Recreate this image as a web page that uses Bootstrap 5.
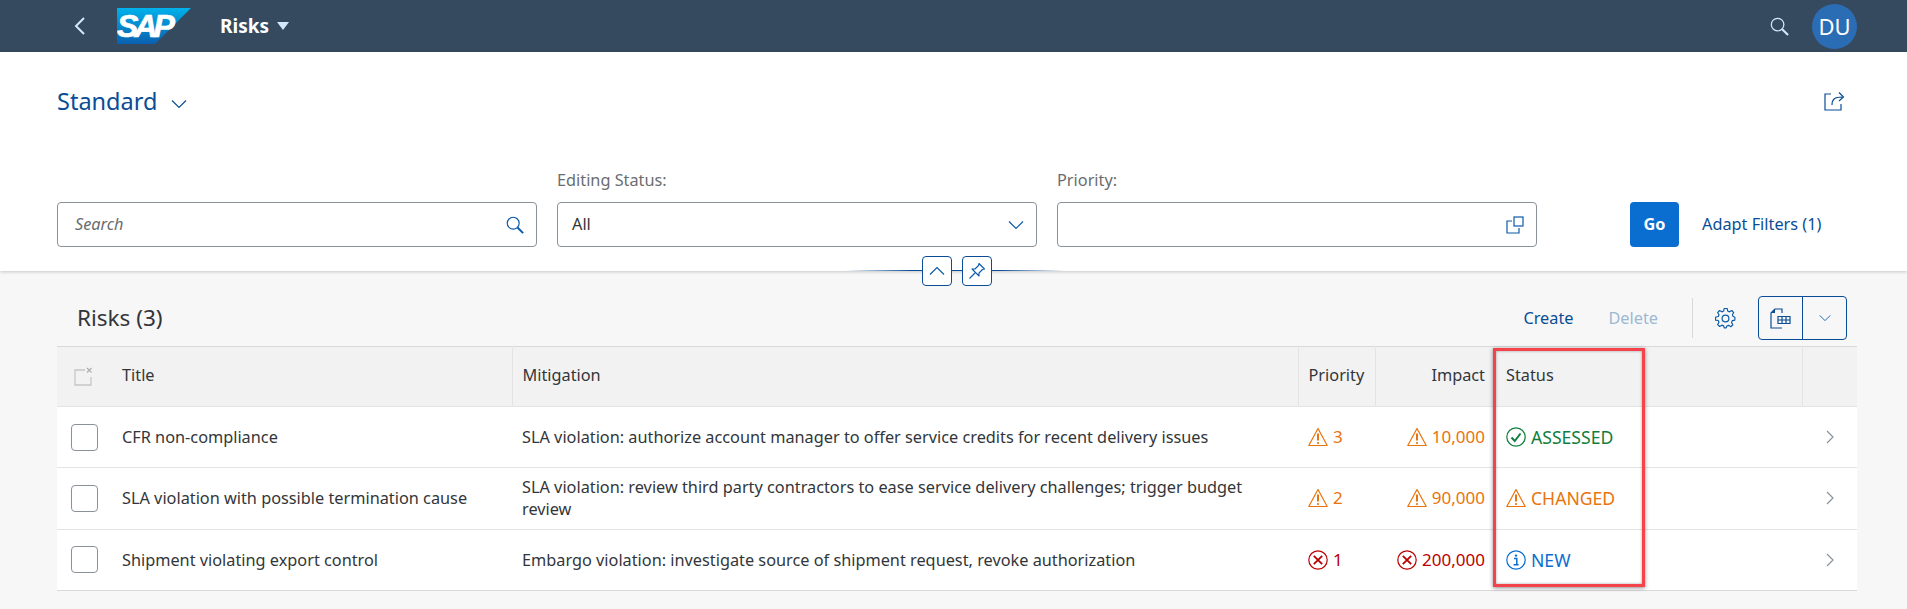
<!DOCTYPE html>
<html lang="en">
<head>
  <meta charset="UTF-8" />
  <meta name="viewport" content="width=device-width, initial-scale=1.0"/>
  <title>Risks</title>
  <link href="https://cdn.jsdelivr.net/npm/bootstrap@5.3.0/dist/css/bootstrap.min.css" rel="stylesheet">
  <style>
    html, body { height: 100%; }
    body {
      background: #f7f7f7;
      color: #32363a;
      font-family: "Noto Sans", "Liberation Sans", sans-serif;
      font-size: 16.3px;
      overflow: hidden;
      position: relative;
    }
    svg { display: block; flex: none; }
    .shell-bar { background: #354a5f; height: 52px; padding: 0 50px 0 74px; }
    .shell-title { color: #fff; font-weight: 700; font-size: 19px; margin-left: 29px; }
    .shell-logo { margin-left: 32px; }
    .avatar {
      width: 45px; height: 45px; border-radius: 50%;
      background: #2b6db5; color: #fff; font-size: 22px;
      margin-left: 23px;
    }
    .filter-area { background: #fff; height: 219px; padding: 31px 62px 24px 57px; box-shadow: 0 1px 3px rgba(0,0,0,.2); position: relative; }
    .variant-name { color: #0a4d96; font-size: 23.5px; line-height: 36px; }
    .variant-arrow { margin-left: 14px; margin-top: 6px; color: #0a4d96; }
    .filter-row { margin-top: 50px; display: grid; grid-template-columns: repeat(3, 480px) auto; column-gap: 20px; }
    .filter-label { color: #6a6d70; line-height: 22px; margin-bottom: 11px; height: 22px; }
    .filter-box { height: 45px; border: 1px solid #89919a; border-radius: 4px; background: #fff; padding: 0 12px 0 14px; }
    .filter-hint { font-style: italic; color: #6a6d70; margin-left: 3px; }
    .filter-actions { padding-left: 73px; padding-top: 33px; }
    .go-btn { background: #0a6ed1; color: #fff; font-weight: 700; width: 49px; height: 45px; border: 0; border-radius: 4px; font-size: 16.3px; padding: 0; }
    .link-blue { color: #0a4d96; text-decoration: none; }
    .adapt-link { margin-left: 23px; }
    .collapse-line {
      position: absolute; left: 845px; width: 220px; top: 218px; height: 1px;
      background: linear-gradient(to right, transparent, #0a4d96 30%, #0a4d96 70%, transparent);
    }
    .collapse-btns { position: absolute; left: 922px; top: 204px; gap: 10px; }
    .mini-btn { width: 30px; height: 30px; border: 1px solid #0a4d96; border-radius: 4px; background: #fff; }
    .toolbar-row { height: 75px; padding: 25px 60px 6px 77px; }
    .table-heading { font-size: 22.5px; }
    .tool-sep { width: 1px; height: 40px; background: #d9d9d9; margin: 0 22px 0 34px; }
    .disabled-blue { color: #9db8d4; margin-left: 35px; }
    .view-group { border: 1px solid #0a4d96; border-radius: 4px; height: 44px; width: 89px; margin-left: 22px; }
    .view-group > div { height: 100%; }
    .view-left { width: 44px; border-right: 1px solid #0a4d96; }
    .view-right { flex: 1; }
    .risk-wrap { margin: 0 50px 0 57px; }
    .risk-table { table-layout: fixed; width: 1800px; margin: 0; color: #32363a; background: #fff; }
    .risk-table th, .risk-table td { vertical-align: middle; padding: 0 10px; border-bottom: 1px solid #e4e4e4; font-weight: 400; line-height: 22px; }
    .risk-table thead th { background: #f2f2f2; height: 60px; border-top: 1px solid #d9d9d9; border-bottom: 1px solid #e4e4e4; padding-bottom: 4px; }
    .risk-table tbody td { height: 61.3px; }
    .risk-table tbody tr:last-child td { border-bottom: 1px solid #d9d9d9; }
    .bar-right { border-right: 1px solid #e4e4e4; }
    .c-sel { width: 55px; } .c-title { width: 400px; } .c-mit { width: 786px; }
    .c-pri { width: 77px; } .c-imp { width: 118px; } .c-sta { width: 309px; } .c-nav { width: 55px; }
    .sel-box { width: 27px; height: 27px; border: 1px solid #89919a; border-radius: 4px; margin-left: 14px; background: #fff; }
    .head-sel { margin-left: 17px; }
    .pad-sel { padding: 0 !important; }
    .pad-sta { padding-left: 13px !important; }
    .nav-arrow { margin-right: 13px; color: #89919a; }
    .warn-text { color: #e9730c; } .err-text { color: #bb0000; }
    .ok-text { color: #107e3e; } .info-text { color: #0a6ed1; }
    .status-gap { gap: 5px; font-size: 17px; }
    .status-col .status-gap { font-size: 17.6px; }
    .red-frame {
      position: absolute; left: 1493px; top: 348px; width: 152px; height: 239px;
      border: 3px solid #f4434b;
      box-shadow: 0 1px 4px rgba(0,0,0,.45), inset 0 0 3px rgba(0,0,0,.35);
      pointer-events: none;
    }
  </style>
</head>
<body>

  <svg width="0" height="0" class="position-absolute">
    <symbol id="ic-warn" viewBox="0 0 20 20"><path d="M10 1.500 19.200 18.500H.8Z" fill="none" stroke="currentColor" stroke-width="1.200" stroke-linejoin="round"/><path d="M10 6.500v7" stroke="currentColor" stroke-width="2"/><circle cx="10" cy="16" r="1.100" fill="currentColor"/></symbol>
    <symbol id="ic-err" viewBox="0 0 20 20"><circle cx="10" cy="10" r="9.200" fill="none" stroke="currentColor" stroke-width="1.200"/><path d="M5.800 5.800 14.200 14.200M14.200 5.800 5.800 14.200" stroke="currentColor" stroke-width="1.800"/></symbol>
    <symbol id="ic-ok" viewBox="0 0 20 20"><circle cx="10" cy="10" r="9.200" fill="none" stroke="currentColor" stroke-width="1.200"/><path d="M5.500 10.500 8.800 14 14.500 6.500" fill="none" stroke="currentColor" stroke-width="2"/></symbol>
    <symbol id="ic-info" viewBox="0 0 20 20"><circle cx="10" cy="10" r="9.200" fill="none" stroke="currentColor" stroke-width="1.200"/><circle cx="10" cy="5.600" r="1.200" fill="currentColor"/><path d="M8 8.600h2.800v6M7.600 14.800h5" fill="none" stroke="currentColor" stroke-width="1.500"/></symbol>
    <symbol id="ic-search" viewBox="0 0 20 20"><circle cx="8" cy="8" r="6.600" fill="none" stroke="currentColor" stroke-width="1.300"/><path d="M12.800 12.800 19 19" stroke="currentColor" stroke-width="2.200"/></symbol>
    <symbol id="ic-down" viewBox="0 0 16 10"><path d="M1 1.500 8 8.500 15 1.500" fill="none" stroke="currentColor" stroke-width="1.200"/></symbol>
    <symbol id="ic-next" viewBox="0 0 8 14"><path d="M1 1 7 7 1 13" fill="none" stroke="currentColor" stroke-width="1.200"/></symbol>
  </svg>

  <!-- shell bar -->
  <nav class="shell-bar d-flex align-items-center">
    <svg width="11" height="18" viewBox="0 0 11 18"><path d="M10 1 2 9l8 8" fill="none" stroke="#d1e8ff" stroke-width="2"/></svg>
    <svg class="shell-logo" width="74" height="36" viewBox="0 0 74 36">
      <defs><linearGradient id="sapgrad" x1="0" y1="0" x2="0" y2="1"><stop offset="0" stop-color="#00b1eb"/><stop offset="1" stop-color="#0a60b0"/></linearGradient></defs>
      <polygon points="0,0 74,0 38,36 0,36" fill="url(#sapgrad)"/>
      <text x="0" y="29" font-family="Liberation Sans" font-weight="700" font-style="italic" font-size="32" letter-spacing="-4" fill="#fff" stroke="#fff" stroke-width=".7">SAP</text>
    </svg>
    <span class="shell-title">Risks</span>
    <svg class="ms-2" width="12" height="8" viewBox="0 0 12 8"><path d="M0 0h12L6 8Z" fill="#d1e8ff"/></svg>
    <svg class="ms-auto" width="19" height="19" style="color:#d1e8ff"><use href="#ic-search"/></svg>
    <div class="avatar d-flex align-items-center justify-content-center">DU</div>
  </nav>

  <!-- filter bar -->
  <section class="filter-area">
    <div class="d-flex align-items-center">
      <span class="variant-name">Standard</span>
      <svg class="variant-arrow" width="16" height="10"><use href="#ic-down"/></svg>
      <svg class="ms-auto" width="21" height="20" viewBox="0 0 21 20"><path d="M7 3H1v16h16v-6" fill="none" stroke="#0a4d96" stroke-width="1.200"/><path d="M8 14c0-6 3-8 10-8M15 1.500l4.500 4.500-4.500 4" fill="none" stroke="#0a4d96" stroke-width="1.200"/></svg>
    </div>
    <div class="filter-row">
      <div>
        <div class="filter-label"></div>
        <div class="filter-box d-flex align-items-center justify-content-between">
          <span class="filter-hint">Search</span>
          <svg width="18" height="18" style="color:#0a5ba8"><use href="#ic-search"/></svg>
        </div>
      </div>
      <div>
        <div class="filter-label">Editing Status:</div>
        <div class="filter-box d-flex align-items-center justify-content-between">
          <span>All</span>
          <svg width="16" height="10" style="color:#0a5ba8"><use href="#ic-down"/></svg>
        </div>
      </div>
      <div>
        <div class="filter-label">Priority:</div>
        <div class="filter-box d-flex align-items-center justify-content-end">
          <svg width="18" height="18" viewBox="0 0 18 18"><path d="M6 5H1v12h12v-5" fill="none" stroke="#0a5ba8" stroke-width="1.200"/><rect x="8" y="1" width="9" height="9" fill="none" stroke="#0a5ba8" stroke-width="1.200"/></svg>
        </div>
      </div>
      <div class="filter-actions d-flex align-items-center">
        <button class="btn go-btn">Go</button>
        <a href="#" class="link-blue adapt-link">Adapt Filters (1)</a>
      </div>
    </div>
    <div class="collapse-line"></div>
    <div class="collapse-btns d-flex">
      <div class="mini-btn d-flex align-items-center justify-content-center">
        <svg width="16" height="10"><path d="M1 8.500 8 1.500 15 8.500" fill="none" stroke="#0a5ba8" stroke-width="1.200"/></svg>
      </div>
      <div class="mini-btn d-flex align-items-center justify-content-center">
        <svg width="18" height="18" viewBox="0 0 18 18"><path d="M11 1.500 16.500 7 14.500 7.500 11 11 11 14 4 7 7 7 10.500 3.500ZM7 11 1.500 16.500" fill="none" stroke="#0a5ba8" stroke-width="1.100" stroke-linejoin="round"/></svg>
      </div>
    </div>
  </section>

  <!-- table toolbar -->
  <div class="toolbar-row d-flex align-items-center">
    <span class="table-heading">Risks (3)</span>
    <a href="#" class="link-blue ms-auto">Create</a>
    <span class="disabled-blue">Delete</span>
    <div class="tool-sep"></div>
    <svg width="21" height="21" viewBox="0 0 21 21"><circle cx="10.500" cy="10.500" r="3.400" fill="none" stroke="#0a5ba8" stroke-width="1.200"/><path d="M9 1h3l.6 2.700 1.800.8 2.400-1.400 2 2.100-1.400 2.300.8 1.800L20 10v3l-2.700.6-.8 1.800 1.400 2.400-2.100 2-2.300-1.400-1.800.7L11 21H9l-.6-2.100-1.800-.7-2.300 1.400-2.100-2 1.400-2.400-.8-1.800L0 13v-3l2.800-.7.800-1.800L2.200 5.200l2-2.100 2.400 1.400 1.800-.8Z" transform="translate(.5 -.5) scale(.97)" fill="none" stroke="#0a5ba8" stroke-width="1.200" stroke-linejoin="round"/></svg>
    <div class="view-group d-flex">
      <div class="view-left d-flex align-items-center justify-content-center">
        <svg width="21" height="21" viewBox="0 0 21 21"><path d="M5 1h7v4M5 1 1 5v15h11" fill="none" stroke="#0a4d96" stroke-width="1.200"/><path d="M1 5l4-4v4Z" fill="#0a4d96"/><path d="M8 8.500h12v7H8Zm0 3.500h12M12 8.500v7M16 8.500v7" fill="none" stroke="#0a4d96" stroke-width="1.200"/></svg>
      </div>
      <div class="view-right d-flex align-items-center justify-content-center">
        <svg width="12" height="8" style="color:#0a5ba8"><use href="#ic-down"/></svg>
      </div>
    </div>
  </div>

  <!-- table -->
  <div class="risk-wrap">
    <table class="table risk-table">
      <colgroup>
        <col class="c-sel"><col class="c-title"><col class="c-mit"><col class="c-pri"><col class="c-imp"><col class="c-sta"><col class="c-nav">
      </colgroup>
      <thead>
        <tr>
          <th class="pad-sel">
            <svg class="head-sel" width="19" height="19" viewBox="0 0 19 19"><path d="M11 3H1v15h16V10" fill="none" stroke="#c4c6c8" stroke-width="1.300"/><path d="M13 1l4.500 4.500M17.500 1 13 5.500" stroke="#a9adb0" stroke-width="1.100"/></svg>
          </th>
          <th class="bar-right">Title</th>
          <th class="bar-right">Mitigation</th>
          <th class="bar-right">Priority</th>
          <th class="text-end pe-2">Impact</th>
          <th class="bar-right pad-sta">Status</th>
          <th></th>
        </tr>
      </thead>
      <tbody id="risk-rows"></tbody>
    </table>
  </div>

  <div class="red-frame"></div>

  <script>
    const icons = { warn: "ic-warn", err: "ic-err", ok: "ic-ok", info: "ic-info" };
    const rows = [
      { title: "CFR non-compliance", mit: "SLA violation: authorize account manager to offer service credits for recent delivery issues", pri: ["warn", "3"], imp: ["warn", "10,000"], sta: ["ok", "ASSESSED"] },
      { title: "SLA violation with possible termination cause", mit: "SLA violation: review third party contractors to ease service delivery challenges; trigger budget review", pri: ["warn", "2"], imp: ["warn", "90,000"], sta: ["warn", "CHANGED"] },
      { title: "Shipment violating export control", mit: "Embargo violation: investigate source of shipment request, revoke authorization", pri: ["err", "1"], imp: ["err", "200,000"], sta: ["info", "NEW"] }
    ];

    function state(pair, extra) {
      return `<div class="d-flex align-items-center status-gap ${pair[0]}-text ${extra || ""}">
        <svg width="20" height="20"><use href="#${icons[pair[0]]}"/></svg><span>${pair[1]}</span></div>`;
    }

    document.getElementById("risk-rows").innerHTML = rows.map((r) => `
      <tr>
        <td class="pad-sel"><div class="sel-box"></div></td>
        <td>${r.title}</td>
        <td>${r.mit}</td>
        <td>${state(r.pri)}</td>
        <td class="pe-2">${state(r.imp, "justify-content-end")}</td>
        <td class="pad-sta status-col">${state(r.sta)}</td>
        <td><svg class="ms-auto nav-arrow" width="8" height="14"><use href="#ic-next"/></svg></td>
      </tr>`).join("");
  </script>
  <script src="https://cdn.jsdelivr.net/npm/bootstrap@5.3.0/dist/js/bootstrap.bundle.min.js"></script>
</body>
</html>
